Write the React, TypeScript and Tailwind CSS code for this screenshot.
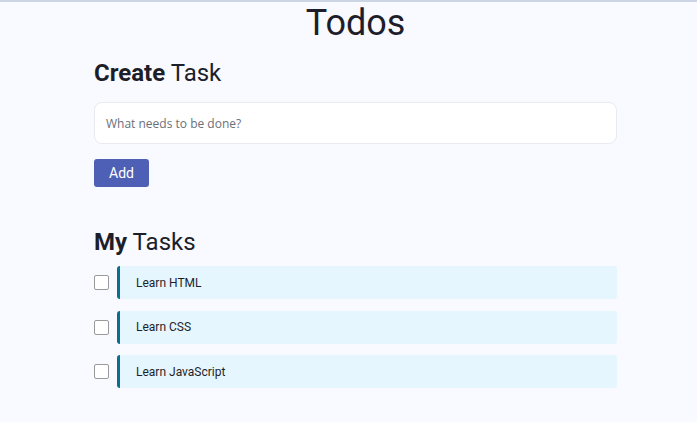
import React from "react";

const tasks = ["Learn HTML", "Learn CSS", "Learn JavaScript"];

export default function App() {
  return (
    <div className="min-h-[422px] w-full bg-[#f8faff] border-t-2 border-[#cbd5e4] font-['Roboto',sans-serif] text-[#1e1e2a]">
      <div className="ml-[94px] w-[523px]">
        <h1 className="text-center text-[36px] leading-[42px] font-normal">Todos</h1>
        <h2 className="mt-[15px] text-[24px] leading-[28px]">
          <span className="font-bold">Create</span> Task
        </h2>
        <input
          placeholder="What needs to be done?"
          className="mt-[15px] block h-[42px] w-full rounded-[8px] border border-[#e9ebf0] bg-white px-[11px] font-['Open_Sans',sans-serif] text-[12px] text-[#333] placeholder:text-[#6b6f7a] outline-none"
        />
        <button className="mt-[15px] block h-[28px] w-[55px] rounded-[3px] bg-[#4e5fb6] text-[14px] text-white">
          Add
        </button>
        <h2 className="mt-[41px] text-[24px] leading-[28px]">
          <span className="font-bold">My</span> Tasks
        </h2>
        <div className="mt-[10px] flex flex-col gap-[11.5px]">
          {tasks.map((t) => (
            <div key={t} className="flex items-center">
              <div className="h-[15px] w-[15px] rounded-[2px] border border-[#9a9a9a] bg-white" />
              <div className="ml-[8px] flex h-[33px] flex-1 items-center rounded-[3px] border-l-[3px] border-[#0b6f8c] bg-[#e5f6fe] pl-[16px] text-[12px]">
                {t}
              </div>
            </div>
          ))}
        </div>
      </div>
    </div>
  );
}
